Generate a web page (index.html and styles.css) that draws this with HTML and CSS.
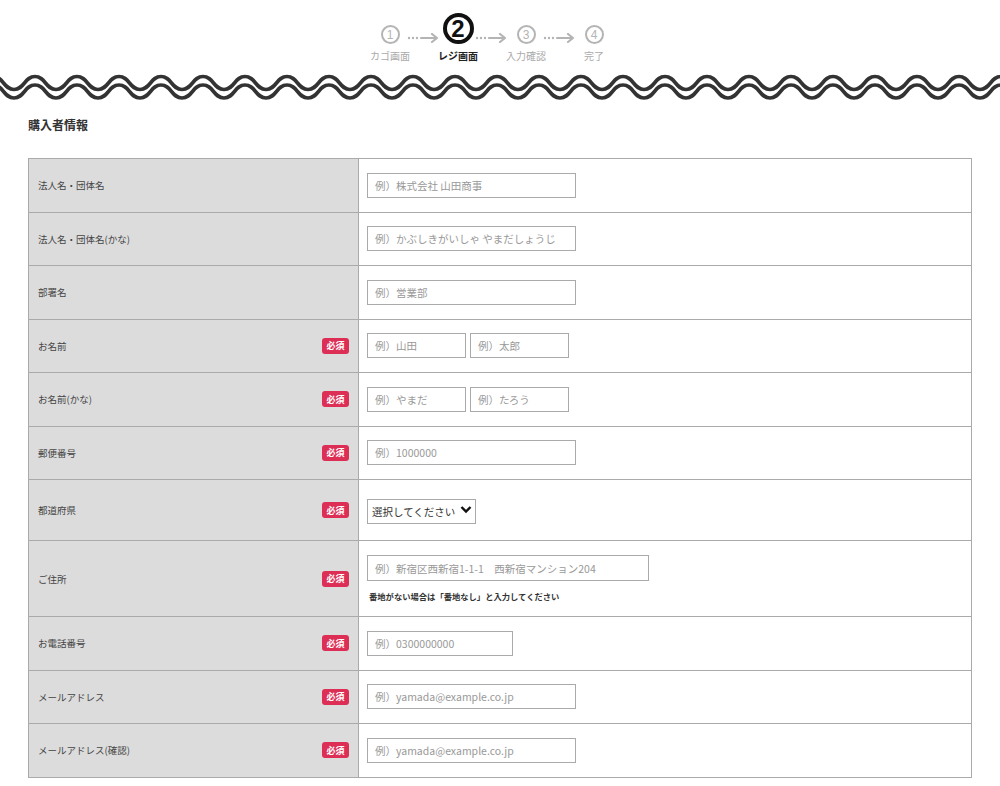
FILE: index.html
```html
<!DOCTYPE html>
<html lang="ja">
<head>
    <meta charset="utf-8">
    <meta name="viewport" content="width=device-width, initial-scale=1">
    <title>レジ画面</title>
    <link rel="stylesheet" href="styles.css">
</head>
<body>
    <div class="steps">
        <div class="step">
            <div class="circle-box"><span class="num">1</span></div>
            <div class="step-label">カゴ画面</div>
        </div>
        <svg class="arrow" width="34" height="10" viewBox="0 0 34 10">
            <circle cx="2" cy="5" r="1.2"/><circle cx="6" cy="5" r="1.2"/><circle cx="10" cy="5" r="1.2"/>
            <path d="M14 5 H30 M25 1 L30 5 L25 9" />
        </svg>
        <div class="step active">
            <div class="circle-box"><span class="num">2</span></div>
            <div class="step-label">レジ画面</div>
        </div>
        <svg class="arrow" width="34" height="10" viewBox="0 0 34 10">
            <circle cx="2" cy="5" r="1.2"/><circle cx="6" cy="5" r="1.2"/><circle cx="10" cy="5" r="1.2"/>
            <path d="M14 5 H30 M25 1 L30 5 L25 9" />
        </svg>
        <div class="step">
            <div class="circle-box"><span class="num">3</span></div>
            <div class="step-label">入力確認</div>
        </div>
        <svg class="arrow" width="34" height="10" viewBox="0 0 34 10">
            <circle cx="2" cy="5" r="1.2"/><circle cx="6" cy="5" r="1.2"/><circle cx="10" cy="5" r="1.2"/>
            <path d="M14 5 H30 M25 1 L30 5 L25 9" />
        </svg>
        <div class="step">
            <div class="circle-box"><span class="num">4</span></div>
            <div class="step-label">完了</div>
        </div>
    </div>

    <svg class="wave" width="1000" height="45" viewBox="0 0 1000 45">
        <defs>
            <pattern id="wavetile" x="35" y="0" width="42" height="45" patternUnits="userSpaceOnUse">
                <path d="M0 16.5 C10.5 16.5 10.5 29.5 21 29.5 C31.5 29.5 31.5 16.5 42 16.5" />
                <path d="M0 25 C10.5 25 10.5 38 21 38 C31.5 38 31.5 25 42 25" />
            </pattern>
        </defs>
        <rect x="0" y="0" width="1000" height="45" fill="url(#wavetile)"/>
    </svg>

    <div class="content">
        <h2 class="section-title">購入者情報</h2>

        <div class="form-table">
            <div class="row">
                <div class="label"><span>法人名・団体名</span></div>
                <div class="value"><input class="w-md" type="text" placeholder="例）株式会社 山田商事"></div>
            </div>
            <div class="row">
                <div class="label"><span>法人名・団体名(かな)</span></div>
                <div class="value"><input class="w-md" type="text" placeholder="例）かぶしきがいしゃ やまだしょうじ"></div>
            </div>
            <div class="row">
                <div class="label"><span>部署名</span></div>
                <div class="value"><input class="w-md" type="text" placeholder="例）営業部"></div>
            </div>
            <div class="row">
                <div class="label"><span>お名前</span><span class="req">必須</span></div>
                <div class="value">
                    <input class="w-half" type="text" placeholder="例）山田">
                    <input class="w-half" type="text" placeholder="例）太郎">
                </div>
            </div>
            <div class="row">
                <div class="label"><span>お名前(かな)</span><span class="req">必須</span></div>
                <div class="value">
                    <input class="w-half" type="text" placeholder="例）やまだ">
                    <input class="w-half" type="text" placeholder="例）たろう">
                </div>
            </div>
            <div class="row">
                <div class="label"><span>郵便番号</span><span class="req">必須</span></div>
                <div class="value"><input class="w-md" type="text" placeholder="例）1000000"></div>
            </div>
            <div class="row row-select">
                <div class="label"><span>都道府県</span><span class="req">必須</span></div>
                <div class="value">
                    <div class="select-wrap">
                        <select>
                            <option>選択してください</option>
                        </select>
                        <svg class="chevron" width="12" height="9" viewBox="0 0 12 9">
                            <path d="M1.5 2 L6 6.5 L10.5 2" />
                        </svg>
                    </div>
                </div>
            </div>
            <div class="row row-address">
                <div class="label"><span>ご住所</span><span class="req">必須</span></div>
                <div class="value value-stack">
                    <input class="w-lg" type="text" placeholder="例）新宿区西新宿1-1-1　西新宿マンション204">
                    <p class="note">番地がない場合は「番地なし」と入力してください</p>
                </div>
            </div>
            <div class="row">
                <div class="label"><span>お電話番号</span><span class="req">必須</span></div>
                <div class="value"><input class="w-sm" type="text" placeholder="例）0300000000"></div>
            </div>
            <div class="row">
                <div class="label"><span>メールアドレス</span><span class="req">必須</span></div>
                <div class="value"><input class="w-md" type="text" placeholder="例）yamada@example.co.jp"></div>
            </div>
            <div class="row">
                <div class="label"><span>メールアドレス(確認)</span><span class="req">必須</span></div>
                <div class="value"><input class="w-md" type="text" placeholder="例）yamada@example.co.jp"></div>
            </div>
        </div>
    </div>
</body>
</html>
```

FILE: styles.css
```css
body {
    margin: 0;
    background-color: #fff;
    font-family: "Noto Sans CJK JP", "Noto Sans", sans-serif;
    color: #333;
}

/* ステップ表示 */
.steps {
    display: flex;
    justify-content: center;
    padding-top: 14px;
    padding-right: 16px;
}
.step {
    width: 40px;
    display: flex;
    flex-direction: column;
    align-items: center;
}
.circle-box {
    height: 30px;
    display: flex;
    align-items: flex-end;
    justify-content: center;
}
.num {
    width: 15px;
    height: 15px;
    border: 2px solid #b4b4b4;
    border-radius: 50%;
    display: flex;
    align-items: center;
    justify-content: center;
    font-family: "Liberation Sans", sans-serif;
    font-size: 12px;
    line-height: 1;
    color: #b4b4b4;
}
.step.active .num {
    width: 23px;
    height: 23px;
    border: 4px solid #111;
    font-size: 24px;
    font-weight: bold;
    color: #111;
}
.step-label {
    margin-top: 5px;
    font-size: 10px;
    line-height: 14px;
    color: #aaa;
    white-space: nowrap;
}
.step.active .step-label {
    color: #222;
    font-weight: bold;
}
.arrow {
    flex-shrink: 0;
    margin: 19px -3px 0;
    fill: #b4b4b4;
}
.arrow path {
    fill: none;
    stroke: #b4b4b4;
    stroke-width: 2.2;
    stroke-linecap: round;
    stroke-linejoin: round;
}

/* 波線 */
.wave {
    display: block;
    margin-top: -3px;
}
.wave path {
    fill: none;
    stroke: #333;
    stroke-width: 3.6;
}

.content {
    padding: 0 28px 20px;
}
.section-title {
    margin: 10px 0 0;
    font-size: 12px;
    line-height: 20px;
    font-weight: bold;
    color: #333;
}

/* フォーム */
.form-table {
    margin-top: 23px;
    border: 1px solid #aaa;
}
.row {
    display: grid;
    grid-template-columns: 330px 1fr;
    min-height: 52.5px;
    border-top: 1px solid #aaa;
}
.row:first-child {
    border-top: none;
}
.row-select {
    min-height: 60px;
}
.row-address {
    min-height: 75px;
}
.label {
    display: flex;
    align-items: center;
    justify-content: space-between;
    padding: 0 9px 0 9px;
    background-color: #dcdcdc;
    border-right: 1px solid #aaa;
    font-size: 9.5px;
    color: #444;
}
.req {
    width: 27px;
    height: 16px;
    border-radius: 3px;
    background-color: #dd2e55;
    color: #fff;
    font-size: 9px;
    font-weight: bold;
    display: flex;
    align-items: center;
    justify-content: center;
}
.value {
    display: flex;
    align-items: center;
    gap: 4px;
    padding: 0 8px;
}
.value-stack {
    flex-direction: column;
    align-items: flex-start;
    justify-content: center;
    gap: 0;
}
input {
    box-sizing: border-box;
    height: 25px;
    margin: 0;
    padding: 0 7px;
    border: 1px solid #aaa;
    font-family: "Noto Sans CJK JP", sans-serif;
    font-size: 10.5px;
    color: #333;
    outline: none;
}
input::placeholder {
    color: #999;
}
.w-md { width: 209px; }
.w-half { width: 99px; }
.w-sm { width: 146px; }
.w-lg { width: 282px; height: 26px; }

.select-wrap {
    position: relative;
    width: 109px;
}
select {
    box-sizing: border-box;
    width: 109px;
    height: 25px;
    margin: 0;
    padding: 0 4px;
    border: 1px solid #aaa;
    border-radius: 0;
    background: #fff;
    -webkit-appearance: none;
    appearance: none;
    font-family: "Noto Sans CJK JP", sans-serif;
    font-size: 10.5px;
    color: #333;
}
.chevron {
    position: absolute;
    right: 4px;
    top: 8px;
    pointer-events: none;
}
.chevron path {
    fill: none;
    stroke: #111;
    stroke-width: 2.4;
}
.note {
    margin: 9px 0 0 2px;
    font-size: 8.3px;
    font-weight: bold;
    color: #333;
}
```
